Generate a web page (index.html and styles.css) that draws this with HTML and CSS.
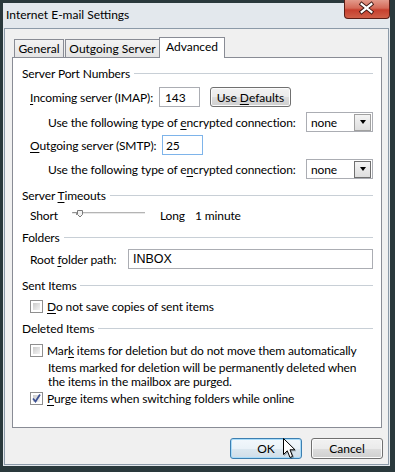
FILE: index.html
```html
<!DOCTYPE html>
<html lang="en">

<head>
    <meta charset="UTF-8">
    <title>Internet E-mail Settings</title>
    <link rel="stylesheet" href="styles.css">
</head>

<body>

    <div class="window">
        <div class="frame">
            <div class="titlebar">
                <span class="title">Internet E-mail Settings</span>
                <div class="close">
                    <svg width="46" height="19" viewBox="0 0 46 19">
                        <path d="M18 5 L28 13 M28 5 L18 13" stroke="#3a1410" stroke-width="4" stroke-linecap="square" />
                        <path d="M18 5 L28 13 M28 5 L18 13" stroke="#ffffff" stroke-width="2.2" stroke-linecap="square" />
                    </svg>
                </div>
            </div>

            <div class="client">
                <div class="tabs">
                    <div class="tab tab-general">General</div>
                    <div class="tab tab-outgoing">Outgoing Server</div>
                    <div class="tab tab-advanced active">Advanced</div>
                </div>

                <section class="panel">
                    <div class="group mt8"><span>Server Port Numbers</span></div>

                    <div class="row row-field mt7 indent">
                        <span class="lbl lbl-in"><u>I</u>ncoming server (IMAP):</span>
                        <span class="textbox port">143</span>
                        <button class="btn btn-defaults">Use <u>D</u>efaults</button>
                    </div>
                    <div class="row row-field mt5 indent2">
                        <span class="lbl lbl-enc">Use the following type of <u>e</u>ncrypted connection:</span>
                        <span class="combo">none<span class="combo-btn"><span class="arrow"></span></span></span>
                    </div>
                    <div class="row row-field mt3 indent">
                        <span class="lbl lbl-out"><u>O</u>utgoing server (SMTP):</span>
                        <span class="textbox port focus">25</span>
                    </div>
                    <div class="row row-field mt4 indent2">
                        <span class="lbl lbl-enc">Use the following type of e<u>n</u>crypted connection:</span>
                        <span class="combo">none<span class="combo-btn dark"><span class="arrow"></span></span></span>
                    </div>

                    <div class="group mt9"><span>Server <u>T</u>imeouts</span></div>
                    <div class="row row-small mt6 indent">
                        <span class="lbl lbl-short">Short</span>
                        <svg class="slider" width="74" height="14" viewBox="0 0 74 14">
                            <rect x="0" y="4" width="73" height="1" fill="#b4b4b4" />
                            <rect x="0" y="5" width="73" height="1" fill="#e8e8e8" />
                            <path d="M0.5 4.5 L4.5 4.5 L4.5 7" stroke="#909090" fill="none" />
                            <path d="M5.5 2.5 L10.5 2.5 L10.5 6.5 L8 9 L5.5 6.5 Z" fill="#f2f2f2" stroke="#7a7a7a" />
                        </svg>
                        <span class="lbl lbl-long">Long</span>
                        <span>1 minute</span>
                    </div>

                    <div class="group mt8"><span>Folders</span></div>
                    <div class="row row-field mt5 indent">
                        <span class="lbl lbl-root">Root <u>f</u>older path:</span>
                        <span class="textbox inbox">INBOX</span>
                    </div>

                    <div class="group mt9"><span>Sent Items</span></div>
                    <div class="row row-small mt7 indent">
                        <span class="check"></span>
                        <span><u>D</u>o not save copies of sent items</span>
                    </div>

                    <div class="group mt8"><span>Deleted Items</span></div>
                    <div class="row row-small mt8 indent">
                        <span class="check"></span>
                        <span>Mar<u>k</u> items for deletion but do not move them automatically</span>
                    </div>
                    <p class="note mt4">Items marked for deletion will be permanently deleted when<br>the items in the mailbox are purged.</p>
                    <div class="row row-small mt2 indent">
                        <span class="check checked">
                            <svg width="9" height="9" viewBox="0 0 9 9">
                                <path d="M1 4.5 L3.5 7.5 L8 0.5" stroke="#3d5294" stroke-width="1.8" fill="none" />
                            </svg>
                        </span>
                        <span><u>P</u>urge items when switching folders while online</span>
                    </div>
                </section>

                <div class="buttons">
                    <button class="btn btn-dialog default">OK
                        <svg class="cursor" width="14" height="22" viewBox="0 0 14 22">
                            <path d="M0.5 0.5 L0.5 16.5 L4.3 12.8 L7 19.5 L9.6 18.4 L7 11.8 L12 11.8 Z" fill="#ffffff" stroke="#000000" stroke-linejoin="round" />
                        </svg>
                    </button>
                    <button class="btn btn-dialog">Cancel</button>
                </div>
            </div>
        </div>
    </div>

</body>

</html>
```

FILE: styles.css
```css
* {
    margin: 0;
    padding: 0;
    box-sizing: border-box;
}

body {
    font-family: Lato, "Noto Sans", sans-serif;
    font-size: 12px;
    color: #000;
    background: #fff;
}

u {
    text-decoration: underline;
    text-underline-offset: 2px;
}

.window {
    width: 395px;
    height: 472px;
    background: #2a393c;
    padding: 3px 5px 6px 3px;
}

.frame {
    height: 100%;
    background: #e3e8ed;
    display: flex;
    flex-direction: column;
    padding: 0 1px 1px 1px;
}

.titlebar {
    height: 25px;
    display: flex;
    align-items: flex-start;
}

.title {
    line-height: 24px;
    padding-left: 2px;
}

.close {
    margin: -3px -1px 0 auto;
    width: 46px;
    height: 19px;
    border: 1px solid #5a1d16;
    border-top: none;
    border-radius: 0 0 4px 4px;
    background: linear-gradient(#e39a8b 0%, #d46a58 45%, #c63f2e 55%, #cf5f48 100%);
    display: flex;
}

.close svg {
    margin: -1px 0 0 -1px;
}

.client {
    flex: 1;
    background: #f0f0f0;
    border: 1px solid #8c9aa8;
    padding: 8px 0 0 7px;
    display: flex;
    flex-direction: column;
}

/* tabs */

.tabs {
    display: flex;
    align-items: flex-end;
    height: 20px;
    padding-left: 2px;
    position: relative;
    z-index: 1;
}

.tab {
    height: 18px;
    border: 1px solid #898c95;
    border-bottom: none;
    background: linear-gradient(#f3f3f3, #e4e4e4);
    text-align: center;
    line-height: 17px;
    margin-right: 1px;
}

.tab-general {
    width: 50px;
}

.tab-outgoing {
    width: 95px;
}

.tab-advanced {
    width: 66px;
}

.tab.active {
    height: 21px;
    margin: 0 0 -1px -2px;
    background: #fff;
    line-height: 17px;
}

.panel {
    width: 370px;
    height: 371px;
    background: #fff;
    border: 1px solid #898c95;
    padding: 0 8px 0 9px;
    display: flex;
    flex-direction: column;
    letter-spacing: -0.12px;
}

.group {
    height: 14px;
    display: flex;
    align-items: center;
    white-space: nowrap;
}

.group::after {
    content: "";
    flex: 1;
    height: 1px;
    background: #c8cfd6;
    margin-left: 4px;
}

.row {
    display: flex;
    align-items: center;
    white-space: nowrap;
}

.row-field {
    height: 20px;
}

.row-small {
    height: 14px;
}

.indent {
    padding-left: 8px;
}

.indent2 {
    padding-left: 26px;
}

.lbl {
    flex: none;
}

.lbl-in {
    width: 129px;
}

.lbl-out {
    width: 132px;
}

.lbl-enc {
    width: 258px;
}

.lbl-root {
    width: 98px;
}

.lbl-short {
    width: 42px;
}

.lbl-long {
    width: 35px;
    margin-left: 14px;
}

.mt2 { margin-top: 2px; }
.mt3 { margin-top: 3px; }
.mt4 { margin-top: 4px; }
.mt5 { margin-top: 5px; }
.mt6 { margin-top: 6px; }
.mt7 { margin-top: 7px; }
.mt8 { margin-top: 8px; }
.mt9 { margin-top: 9px; }

.textbox {
    height: 20px;
    border: 1px solid #abadb3;
    background: #fff;
    display: flex;
    align-items: center;
}

.port {
    width: 41px;
    padding-left: 5px;
}

.port.focus {
    border-color: #7eb4ea;
    padding-left: 3px;
}

.inbox {
    width: 247px;
    padding-left: 4px;
    font-family: "Liberation Sans", Arial, sans-serif;
    font-size: 12.5px;
    letter-spacing: 0;
}

.combo {
    width: 70px;
    height: 20px;
    border: 1px solid #abadb3;
    background: #fff;
    display: flex;
    align-items: center;
    justify-content: space-between;
    padding: 1px 1px 1px 4px;
}

.combo-btn {
    width: 17px;
    height: 17px;
    border: 1px solid #a0a0a0;
    background: linear-gradient(#f4f4f4, #dedede);
    display: flex;
    align-items: center;
    justify-content: center;
}

.combo-btn.dark {
    border-color: #707070;
}

.arrow {
    border-left: 3px solid transparent;
    border-right: 3px solid transparent;
    border-top: 4px solid #000;
}

/* buttons */

.btn {
    font-family: inherit;
    font-size: 12px;
    color: #000;
    border: 1px solid #707070;
    border-radius: 3px;
    background: linear-gradient(#f2f2f2 0%, #ebebeb 50%, #dddddd 51%, #cfcfcf 100%);
    box-shadow: inset 0 0 0 1px #fbfbfb;
}

.btn-defaults {
    width: 81px;
    height: 20px;
    margin-left: 10px;
}

.buttons {
    display: flex;
    justify-content: flex-end;
    gap: 9px;
    margin-top: 10px;
    padding-right: 5px;
}

.btn-dialog {
    width: 72px;
    height: 21px;
    position: relative;
}

.btn.default {
    border-color: #3c7fb1;
    box-shadow: inset 0 0 0 1px #a9dcf9;
    background: linear-gradient(#f2f8fc 0%, #eaf2f8 50%, #dce8f0 51%, #d0dde8 100%);
}

.cursor {
    position: absolute;
    left: 52px;
    top: -1px;
    filter: drop-shadow(1px 1px 0 rgba(0, 0, 0, 0.25));
}

/* checkboxes */

.check {
    width: 13px;
    height: 13px;
    flex: none;
    border: 1px solid #8f8f8f;
    padding: 2px;
    background: linear-gradient(135deg, #cbcbcb, #f4f4f4) content-box, #fff;
    margin-right: 4px;
    position: relative;
}

.check.checked svg {
    position: absolute;
    left: 1px;
    top: 1px;
}

.note {
    padding-left: 26px;
    line-height: 14px;
    white-space: nowrap;
}
```
